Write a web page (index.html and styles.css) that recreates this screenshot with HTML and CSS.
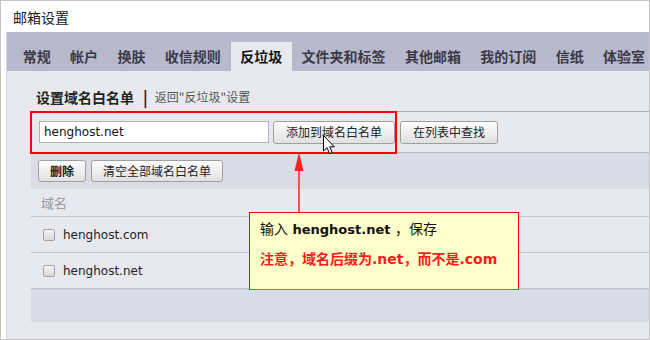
FILE: index.html
```html
<html>
  <head>
    <title>邮箱设置</title>
    <link rel="stylesheet" href="styles.css">
  </head>
  <body>
    <div class="frame">
      <div class="title">邮箱设置</div>
      <div class="panel">
        <ul class="tabs">
          <li>常规</li>
          <li>帐户</li>
          <li>换肤</li>
          <li>收信规则</li>
          <li class="active">反垃圾</li>
          <li>文件夹和标签</li>
          <li>其他邮箱</li>
          <li>我的订阅</li>
          <li>信纸</li>
          <li>体验室</li>
        </ul>
        <div class="content">
          <div class="heading">
            <span class="heading-title">设置域名白名单</span>
            <span class="sep">|</span>
            <span class="back-link">返回"反垃圾"设置</span>
          </div>
          <div class="form-row">
            <input type="text" class="domain-inp" value="henghost.net">
            <button class="btn">添加到域名白名单</button>
            <button class="btn">在列表中查找</button>
          </div>
          <div class="toolbar">
            <button class="btn del-btn">删除</button>
            <button class="btn">清空全部域名白名单</button>
          </div>
          <div class="list-head">域名</div>
          <div class="row"><span class="check"></span>henghost.com</div>
          <div class="row"><span class="check"></span>henghost.net</div>
          <div class="list-foot"></div>
        </div>
      </div>

      <!-- annotations drawn over the screenshot -->
      <div class="mark-box"></div>
      <svg class="mark-arrow" width="14" height="62" viewBox="0 0 14 62">
        <line x1="7" y1="16" x2="7" y2="62" stroke="#ff2b2b" stroke-width="1.6"/>
        <polygon points="7,0 2.5,19 11.5,19" fill="#ff2020"/>
      </svg>
      <svg class="cursor" width="13" height="20" viewBox="0 0 13 20">
        <path d="M0.5 0.5 L0.5 16 L4 12.6 L6.6 18.6 L9.2 17.5 L6.7 11.8 L11.3 11.8 Z" fill="#fff" stroke="#000" stroke-width="1" stroke-linejoin="round"/>
      </svg>
      <div class="callout">
        <p class="callout-line">输入 <b>henghost.net</b> ，保存</p>
        <p class="callout-warn">注意，域名后缀为.net，而不是.com</p>
      </div>
    </div>
  </body>
</html>
```

FILE: styles.css
```css
* {
  margin: 0;
  padding: 0;
  box-sizing: border-box;
}
body {
  background-color: #fff;
  font-family: "DejaVu Sans", "Noto Sans CJK SC", sans-serif;
  color: #222;
}
.frame {
  position: relative;
  width: 650px;
  height: 340px;
  border: 1px solid #c4c4c4;
  background-color: #fff;
  overflow: hidden;
}
.title {
  height: 31px;
  line-height: 32px;
  padding-left: 12px;
  font-family: "Noto Sans CJK SC", sans-serif;
  font-size: 14px;
  color: #1a1a1a;
}
.panel {
  margin-left: 5px;
  height: 307px;
  background-color: #e8e9ef;
  border-left: 1px solid #d6d6de;
}
.tabs {
  list-style: none;
  height: 39px;
  background-color: #b8b9cc;
  display: flex;
  align-items: flex-end;
  padding-left: 6px;
  overflow: hidden;
}
.tabs li {
  flex-shrink: 0;
  white-space: nowrap;
  height: 29px;
  line-height: 29px;
  padding: 0 9.7px;
  font-family: "Noto Sans CJK SC", sans-serif;
  font-size: 14px;
  font-weight: bold;
  color: #3a3a48;
}
.tabs li.active {
  background-color: #e8e9ef;
  color: #111;
}
.content {
  padding-left: 24px;
}
.heading {
  height: 40px;
  padding: 12px 0 0 5px;
  display: flex;
  align-items: center;
  font-family: "Noto Sans CJK SC", sans-serif;
}
.heading-title {
  font-size: 14px;
  font-weight: bold;
  color: #222;
  line-height: 28px;
}
.sep {
  margin: 0 7px 0 9px;
  font-size: 16px;
  font-weight: bold;
  color: #222;
  line-height: 28px;
}
.back-link {
  font-size: 12px;
  color: #555;
  line-height: 28px;
}
.form-row {
  height: 42px;
  border-top: 1px solid #abadbf;
  border-bottom: 1px solid #b3b5c6;
  display: flex;
  align-items: center;
  padding-left: 8px;
}
.domain-inp {
  width: 230px;
  height: 22px;
  border: 1px solid #b2b2b2;
  background-color: #fff;
  padding: 0 4px;
  font-family: "DejaVu Sans", sans-serif;
  font-size: 12px;
  color: #111;
  margin-right: 4px;
}
.btn {
  flex-shrink: 0;
  white-space: nowrap;
  height: 23px;
  padding: 0 12px;
  border: 1px solid #9f9f9f;
  border-radius: 3px;
  background-image: linear-gradient(#fdfdfd, #ececec 60%, #e0e0e0);
  font-family: "Noto Sans CJK SC", sans-serif;
  font-size: 12px;
  line-height: 20px;
  color: #222;
  margin-right: 5px;
}
.toolbar {
  height: 36px;
  background-color: #dadbe5;
  display: flex;
  align-items: center;
  padding-left: 7px;
}
.toolbar .btn {
  height: 22px;
  padding: 0 11px;
}
.del-btn {
  font-weight: bold;
}
.list-head {
  height: 28px;
  line-height: 28px;
  padding-left: 10px;
  border-bottom: 1px solid #c4c5d2;
  font-family: "Noto Sans CJK SC", sans-serif;
  font-size: 13px;
  color: #9a9aa6;
}
.row {
  height: 36px;
  border-bottom: 1px solid #c4c5d2;
  display: flex;
  align-items: center;
  padding-left: 12px;
  font-family: "DejaVu Sans", sans-serif;
  font-size: 12px;
  color: #222;
}
.check {
  width: 12px;
  height: 12px;
  border: 1px solid #a4a4a8;
  border-radius: 2px;
  background-image: linear-gradient(#f4f4f4, #d9d9dc);
  margin-right: 8px;
}
.list-foot {
  height: 33px;
  background-color: #dadbe5;
  border-top: 1px solid #cfd0dc;
}
.mark-box {
  position: absolute;
  left: 29px;
  top: 110px;
  width: 367px;
  height: 43px;
  border: 2px solid #ff0000;
}
.mark-arrow {
  position: absolute;
  left: 291px;
  top: 151px;
}
.cursor {
  position: absolute;
  left: 322px;
  top: 134px;
}
.callout {
  position: absolute;
  left: 248px;
  top: 211px;
  width: 270px;
  height: 78px;
  background-color: #ffffcc;
  border: 1px solid #ff0000;
  border-bottom-color: #ff5050;
  padding: 4px 0 0 10px;
  font-family: "DejaVu Sans", "Noto Sans CJK SC", sans-serif;
}
.callout-line {
  height: 24px;
  line-height: 24px;
  font-size: 14px;
  color: #111;
}
.callout-line b {
  font-size: 13px;
}
.callout-warn {
  margin-top: 6px;
  line-height: 24px;
  font-size: 14px;
  font-weight: bold;
  color: #ff1a1a;
}
```
